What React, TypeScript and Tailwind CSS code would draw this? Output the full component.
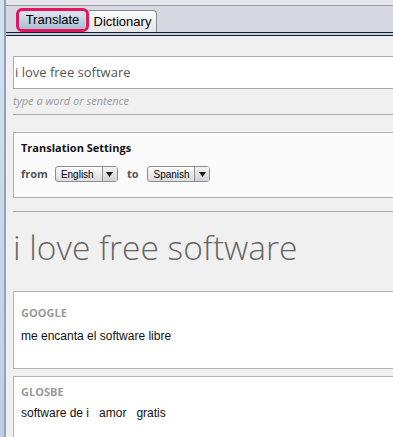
import React from 'react';

const ui = { fontFamily: '"Open Sans", "Noto Sans", sans-serif' };
const arial = { fontFamily: '"Liberation Sans", Arial, sans-serif' };

function Select({ label, width }: { label: string; width: string }) {
  return (
    <div
      className={`flex h-[16px] ${width} items-stretch rounded-[3px] border border-[#8e8f8f] bg-gradient-to-b from-[#fdfdfd] to-[#dcdcdc] shadow-[inset_0_1px_0_#fff]`}
    >
      <div className="flex flex-1 items-center pl-[5px] text-[10px] text-black" style={arial}>
        {label}
      </div>
      <div className="flex w-[15px] items-center justify-center border-l border-[#8e8f8f] bg-gradient-to-b from-[#f2f2f2] to-[#cfd3d8]">
        <svg width="7" height="5" viewBox="0 0 7 5">
          <path d="M0 0 L7 0 L3.5 5 Z" fill="#1a1a1a" />
        </svg>
      </div>
    </div>
  );
}

function ResultCard({ source, text, tall }: { source: string; text: string; tall?: boolean }) {
  return (
    <div
      className={`${tall ? 'h-[80px] pt-[8px]' : 'h-[78px] pt-[14px]'} shrink-0 border border-r-0 border-[#b4b4b4] bg-white pl-[7px]`}
    >
      <div className="text-[11px] font-bold leading-[14px] text-[#9a9a9a]" style={ui}>
        {source}
      </div>
      <div
        className={`${tall ? 'mt-[7px]' : 'mt-[9px]'} whitespace-pre text-[12px] leading-[14px] text-[#111]`}
        style={arial}
      >
        {text}
      </div>
    </div>
  );
}

export default function App() {
  return (
    <div className="flex h-[437px] w-[393px] overflow-hidden bg-[#f0f0f0]">
      {/* window frame */}
      <div className="w-[4px] shrink-0 bg-gradient-to-b from-[#d4e1f1] to-[#bccfe6]" />
      <div className="w-[2px] shrink-0 bg-[#92a2b8]" />

      <div className="flex flex-1 flex-col self-start">
        {/* title strip */}
        <div className="h-[6px] border-b border-[#9b9b9b] bg-[#e4e6eb]" />

        {/* tab bar */}
        <div className="flex h-[26px] items-end bg-[#d6d9e2] pl-[10px]">
          <div className="flex h-[24px] items-center rounded-[6px] border-[3px] border-[#e0175e] px-[1px]">
            <div
              className="flex h-[17px] w-[65px] items-center justify-center rounded-[2px] bg-gradient-to-b from-[#dbe4ee] to-[#aabdd1] text-[13px] text-black"
              style={arial}
            >
              Translate
            </div>
          </div>
          <div
            className="flex h-[22px] w-[68px] items-center justify-center rounded-tr-[4px] border border-b-0 border-l-0 border-[#8a8a8a] bg-gradient-to-b from-[#fbfbfb] to-[#e6e6e6] text-[13px] text-black"
            style={arial}
          >
            Dictionary
          </div>
        </div>
        <div className="h-[1px] bg-[#1b1b28]" />
        <div className="h-[2px] bg-[#c3d3e6]" />
        <div className="h-[1px] bg-[#1b1b28]" />

        {/* content */}
        <div className="flex flex-col pl-[7px]">
          <div
            className="mt-[20px] flex h-[33px] items-center border border-r-0 border-[#aaaaaa] bg-white pl-[1px] text-[13px] text-[#555]"
            style={ui}
          >
            i love free software
          </div>
          <div className="flex h-[25px] items-center text-[11px] italic text-[#9a9a9a]" style={ui}>
            type a word or sentence
          </div>
          <div className="h-[1px] bg-[#a9abb0]" />

          <div className="mt-[17px] h-[66px] border border-r-0 border-[#b0b0b0] bg-[#fafafa] pl-[7px] pt-[8px]">
            <div className="text-[11px] font-bold leading-[14px] text-[#111]" style={ui}>
              Translation Settings
            </div>
            <div className="mt-[11px] flex items-center">
              <span className="mr-[7px] text-[11px] font-bold text-[#555]" style={ui}>
                from
              </span>
              <Select label="English" width="w-[63px]" />
              <span className="mx-[9px] text-[11px] font-bold text-[#555]" style={ui}>
                to
              </span>
              <Select label="Spanish" width="w-[63px]" />
            </div>
          </div>

          <div className="mt-[13px] h-[1px] bg-[#a9abb0]" />

          <div className="flex h-[79px] items-center pb-[7px]">
            <span className="text-[33.5px] font-light leading-none text-[#666]" style={ui}>
              i love free software
            </span>
          </div>

          <ResultCard source="GOOGLE" text="me encanta el software libre" />
          <div className="h-[7px] shrink-0" />
          <ResultCard source="GLOSBE" text="software de i   amor   gratis" tall />
        </div>
      </div>
    </div>
  );
}
